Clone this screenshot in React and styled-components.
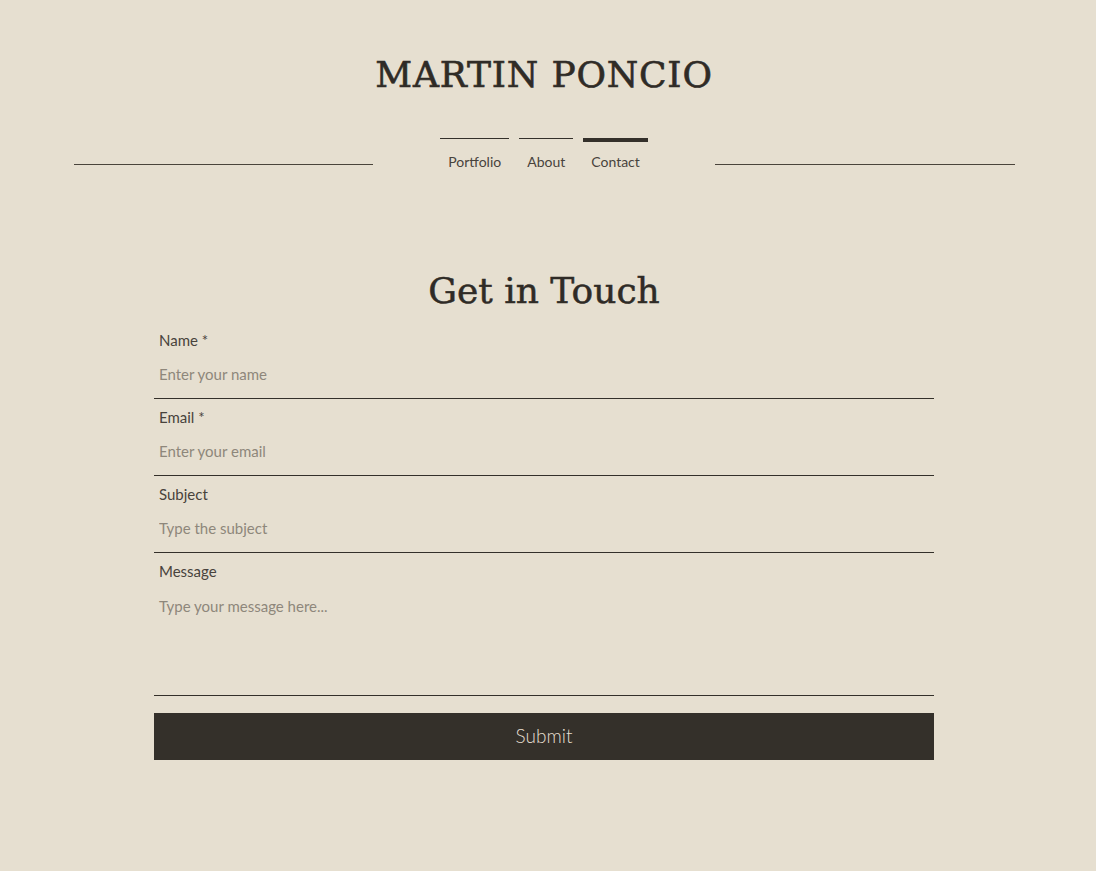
import React from "react";
import styled, { createGlobalStyle } from "styled-components";

const GlobalStyle = createGlobalStyle`
  html, body {
    margin: 0;
    padding: 0;
    background-color: #e6dfd0;
  }
  body {
    font-family: "Lato", "Noto Sans", sans-serif;
    color: #2f2b26;
  }
`;

const navItems = [
  { label: "Portfolio", active: false },
  { label: "About", active: false },
  { label: "Contact", active: true },
];

export default function App() {
  return (
    <>
      <GlobalStyle />
      <Page>
        <Title>MARTIN PONCIO</Title>
        <HeaderRow>
          <Rule />
          <Nav>
            {navItems.map((item) => (
              <NavItem key={item.label} $active={item.active}>
                {item.label}
              </NavItem>
            ))}
          </Nav>
          <Rule />
        </HeaderRow>

        <Heading>Get in Touch</Heading>
        <Form onSubmit={(e) => e.preventDefault()}>
          <Field>
            <Label>Name *</Label>
            <Input type="text" placeholder="Enter your name" />
          </Field>
          <Field>
            <Label>Email *</Label>
            <Input type="email" placeholder="Enter your email" />
          </Field>
          <Field>
            <Label>Subject</Label>
            <Input type="text" placeholder="Type the subject" />
          </Field>
          <Field>
            <Label>Message</Label>
            <TextArea placeholder="Type your message here..." />
          </Field>
          <SubmitButton type="submit">Submit</SubmitButton>
        </Form>
      </Page>
    </>
  );
}

const Page = styled.div`
  width: 1088px;
  min-height: 871px;
  padding-top: 54px;
  box-sizing: border-box;
  display: flex;
  flex-direction: column;
  align-items: center;
`;

const Title = styled.h1`
  margin: 0;
  font-family: "DejaVu Serif", "Liberation Serif", serif;
  font-weight: 400;
  font-size: 36px;
  line-height: 42px;
  letter-spacing: 0.8px;
  color: #2f2b26;
  -webkit-text-stroke: 0.6px #2f2b26;
`;

const HeaderRow = styled.div`
  width: 941px;
  margin-top: 42px;
  display: flex;
  align-items: flex-start;
  gap: 67px;
`;

const Rule = styled.div`
  flex: 1;
  height: 1px;
  margin-top: 26px;
  background-color: #4a443b;
`;

const Nav = styled.nav`
  display: flex;
  gap: 10px;
`;

const NavItem = styled.a`
  display: block;
  padding: ${(p) => (p.$active ? "10px" : "13px")} 8px 0;
  border-top: ${(p) => (p.$active ? "4px" : "1px")} solid #34302a;
  font-size: 14px;
  line-height: 20px;
  color: #48433c;
  cursor: pointer;
`;

const Heading = styled.h2`
  margin: 94px 0 0;
  font-family: "DejaVu Serif", "Liberation Serif", serif;
  font-weight: 400;
  font-size: 36px;
  line-height: 50px;
  color: #2f2b26;
  -webkit-text-stroke: 0.5px #2f2b26;
`;

const Form = styled.form`
  width: 780px;
  margin-top: 6px;
  display: flex;
  flex-direction: column;
`;

const Field = styled.label`
  display: flex;
  flex-direction: column;
  margin-top: 8px;
`;

const Label = styled.span`
  padding: 0 5px;
  font-size: 15px;
  line-height: 20px;
  color: #48433c;
`;

const fieldBase = `
  box-sizing: border-box;
  width: 100%;
  margin: 0;
  padding: 0 5px;
  border: none;
  border-bottom: 1px solid #34302a;
  background: transparent;
  font-family: "Lato", "Noto Sans", sans-serif;
  font-size: 15px;
  line-height: 20px;
  color: #2f2b26;
  outline: none;
  &::placeholder {
    color: #8e877b;
  }
`;

const Input = styled.input`
  ${fieldBase}
  height: 49px;
`;

const TextArea = styled.textarea`
  ${fieldBase}
  height: 115px;
  padding-top: 15px;
  resize: none;
`;

const SubmitButton = styled.button`
  margin-top: 17px;
  height: 47px;
  padding: 0 0 2px;
  border: none;
  background-color: #34302a;
  color: #e6dfd0;
  font-family: "Lato", "Noto Sans", sans-serif;
  font-weight: 300;
  font-size: 19px;
  cursor: pointer;
`;
